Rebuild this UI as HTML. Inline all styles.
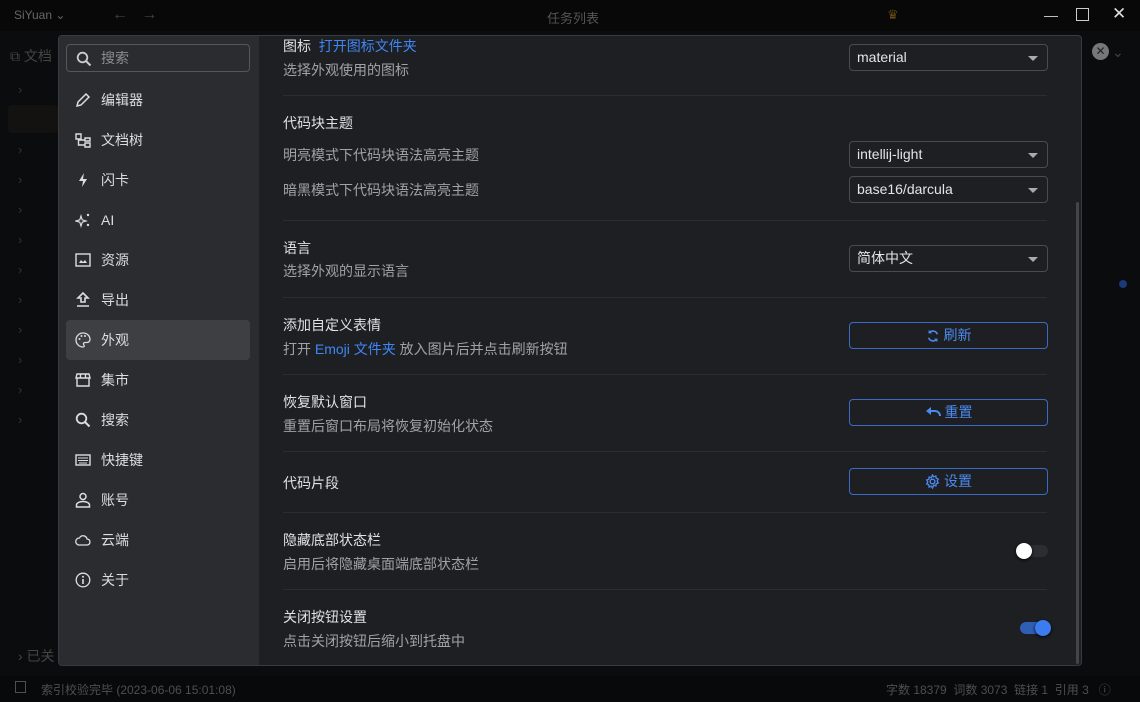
<!DOCTYPE html>
<html><head><meta charset="utf-8"><style>
*{box-sizing:border-box;margin:0;padding:0}
body{width:1140px;height:702px;background:#0b0c0d;font-family:"Liberation Sans","Noto Sans CJK SC",sans-serif;font-size:14px;color:#c8c9cc;position:relative;overflow:hidden}
.abs{position:absolute}
.top{left:0;top:0;width:1140px;height:31px;background:#080809;color:#555}
.dlg{left:58px;top:35px;width:1024px;height:631px;background:#1e1f22;border:1px solid #3a3b3e;border-radius:4px;overflow:hidden}
.side{left:0;top:0;width:200px;height:631px;background:#2b2c30}
.it{position:absolute;left:7px;width:184px;height:40px;border-radius:4px;line-height:40px;padding-left:35px;color:#dcdde0;font-size:14px}
.it svg{position:absolute;left:9px;top:12px}
.it.act{background:#3e3f43}
.lbl{position:absolute;left:224px;color:#e0e1e4;font-size:14px}
.sub{position:absolute;left:224px;color:#9ea3a8;font-size:14px}
.sep{position:absolute;left:224px;width:764px;height:1px;background:#2c2d30}
.sel{position:absolute;left:790px;width:199px;height:27px;border:1px solid #4a4b4f;border-radius:4px;padding-left:7px;line-height:25px;color:#e4e5e8;font-size:14px}
.sel:after{content:"";position:absolute;right:9px;top:11px;border-left:5px solid transparent;border-right:5px solid transparent;border-top:5px solid #aaa}
.btn{position:absolute;left:790px;width:199px;height:27px;border:1px solid #3a6bc4;border-radius:4px;color:#4b8af0;text-align:center;line-height:25px;font-size:14px}
.btn svg{vertical-align:-3px;margin-right:4px}
.blue{color:#3f86f5}
</style></head><body>
<div class="abs top">
<span class="abs" style="left:14px;top:8px;font-size:12px;color:#666">SiYuan ⌄</span>
<span class="abs" style="left:112px;top:6px;color:#444;font-size:16px">←&nbsp;&nbsp;&nbsp;→</span>
<span class="abs" style="left:547px;top:8px;font-size:13px;color:#555">任务列表</span>
<span class="abs" style="left:887px;top:7px;color:#6a4a10;font-size:13px">♛</span>
<span class="abs" style="left:1044px;top:7px;color:#ccc;font-size:14px">—</span>
<span class="abs" style="left:1076px;top:8px;width:13px;height:13px;border:1.5px solid #ccc"></span>
<span class="abs" style="left:1112px;top:4px;color:#ddd;font-size:17px">✕</span>
</div>
<div class="abs" style="left:10px;top:46px;color:#444;font-size:14px">⧉ 文档</div>
<div class="abs" style="left:18px;top:75px;color:#333;font-size:13px;line-height:30px">›<br>›<br>›<br>›<br>›<br>›<br>›<br>›<br>›<br>›<br>›<br>›</div>
<div class="abs" style="left:8px;top:105px;width:50px;height:28px;background:#131210;border-radius:4px"></div>
<div class="abs" style="left:18px;top:646px;color:#444;font-size:14px">› 已关</div>
<div class="abs" style="left:1092px;top:43px;width:17px;height:17px;border-radius:50%;background:#777;color:#222;font-size:12px;text-align:center;line-height:17px">✕</div>
<div class="abs" style="left:1112px;top:44px;color:#444;font-size:14px">⌄</div>
<div class="abs" style="left:1119px;top:280px;width:8px;height:8px;border-radius:50%;background:#1a3a7a"></div>
<div class="abs" style="left:0;top:676px;width:1140px;height:26px;background:#08090a;color:#4e4f52;font-size:12px">
<span class="abs" style="left:15px;top:5px;width:11px;height:12px;border:1.5px solid #4e4f52"></span>
<span class="abs" style="left:41px;top:5px">索引校验完毕 (2023-06-06 15:01:08)</span>
<span class="abs" style="left:886px;top:5px">字数 18379&nbsp; 词数 3073&nbsp; 链接 1&nbsp; 引用 3&nbsp;&nbsp; ⓘ</span>
</div>

<div class="abs dlg">
<div class="abs side">
<div class="abs" style="left:7px;top:8px;width:184px;height:28px;border:1px solid #55575b;border-radius:4px;color:#8a8c90;line-height:26px;padding-left:34px">搜索
<svg class="abs" style="left:9px;top:6px" width="16" height="16" viewBox="0 0 16 16"><circle cx="6.5" cy="6.5" r="4.8" fill="none" stroke="#ccc" stroke-width="1.8"/><path d="M10 10l4.5 4.5" stroke="#ccc" stroke-width="2"/></svg></div>
<div class="it" style="top:44px"><svg width="16" height="16" viewBox="0 0 16 16"><path d="M2 14l1-4 8-8 3 3-8 8z" fill="none" stroke="#ddd" stroke-width="1.5"/></svg>编辑器</div>
<div class="it" style="top:84px"><svg width="16" height="16" viewBox="0 0 16 16"><path d="M1 2h5v5H1zM10 6h5v3h-5zM10 11h5v4h-5zM3.5 7v6h6M3.5 8h6" fill="none" stroke="#ddd" stroke-width="1.4"/></svg>文档树</div>
<div class="it" style="top:124px"><svg width="16" height="16" viewBox="0 0 16 16"><path d="M9 1L4 9h4l-1 6 5-8H8z" fill="#ddd"/></svg>闪卡</div>
<div class="it" style="top:164px"><svg width="16" height="16" viewBox="0 0 16 16"><path d="M6 4l1.2 3.8L11 9l-3.8 1.2L6 14l-1.2-3.8L1 9l3.8-1.2z" fill="none" stroke="#ddd" stroke-width="1.2"/><circle cx="13" cy="3" r="1.2" fill="#ddd"/><circle cx="13" cy="13" r="1.2" fill="#ddd"/></svg>AI</div>
<div class="it" style="top:204px"><svg width="16" height="16" viewBox="0 0 16 16"><rect x="1" y="2" width="14" height="12" fill="none" stroke="#ddd" stroke-width="1.4"/><path d="M4 11l2-3 2 2 2-2 2 3z" fill="#ddd"/></svg>资源</div>
<div class="it" style="top:244px"><svg width="16" height="16" viewBox="0 0 16 16"><path d="M8 1l5 5h-3v4H6V6H3zM2 14h12" fill="none" stroke="#ddd" stroke-width="1.6"/></svg>导出</div>
<div class="it act" style="top:284px"><svg width="16" height="16" viewBox="0 0 16 16"><path d="M8 1a7 7 0 000 14c1.5 0 1.5-1.5.7-2.3-.8-.9 0-2.2 1.2-2.2H12a3 3 0 003-3C15 3.8 12 1 8 1z" fill="none" stroke="#ddd" stroke-width="1.3"/><circle cx="4.5" cy="7" r="1" fill="#ddd"/><circle cx="6.5" cy="4" r="1" fill="#ddd"/><circle cx="10" cy="4" r="1" fill="#ddd"/></svg>外观</div>
<div class="it" style="top:324px"><svg width="16" height="16" viewBox="0 0 16 16"><path d="M2 2h12l1 4H1zM2 6v8h12V6M5.5 2v4M10.5 2v4" fill="none" stroke="#ddd" stroke-width="1.4"/></svg>集市</div>
<div class="it" style="top:364px"><svg width="16" height="16" viewBox="0 0 16 16"><circle cx="6.5" cy="6.5" r="4.8" fill="none" stroke="#ddd" stroke-width="1.8"/><path d="M10 10l4.5 4.5" stroke="#ddd" stroke-width="2"/></svg>搜索</div>
<div class="it" style="top:404px"><svg width="16" height="16" viewBox="0 0 16 16"><rect x="1" y="3" width="14" height="10" fill="none" stroke="#ddd" stroke-width="1.4"/><path d="M3 6h10M3 8.5h10M4 11h8" stroke="#ddd" stroke-width="1"/></svg>快捷键</div>
<div class="it" style="top:444px"><svg width="16" height="16" viewBox="0 0 16 16"><circle cx="8" cy="4.5" r="3" fill="none" stroke="#ddd" stroke-width="1.5"/><path d="M1.5 15v-2c0-2 3-3.5 6.5-3.5s6.5 1.5 6.5 3.5v2z" fill="none" stroke="#ddd" stroke-width="1.5"/></svg>账号</div>
<div class="it" style="top:484px"><svg width="16" height="16" viewBox="0 0 16 16"><path d="M4 13h8a3 3 0 000-6 4 4 0 00-7.5-1A3.5 3.5 0 004 13z" fill="none" stroke="#ddd" stroke-width="1.3"/></svg>云端</div>
<div class="it" style="top:524px"><svg width="16" height="16" viewBox="0 0 16 16"><circle cx="8" cy="8" r="6.8" fill="none" stroke="#ddd" stroke-width="1.3"/><path d="M8 7v5" stroke="#ddd" stroke-width="1.6"/><circle cx="8" cy="4.7" r="1" fill="#ddd"/></svg>关于</div>
</div>

<div class="lbl" style="top:0px">图标&nbsp; <span class="blue">打开图标文件夹</span></div>
<div class="sub" style="top:24px">选择外观使用的图标</div>
<div class="sel" style="top:8px">material</div>
<div class="sep" style="top:59px"></div>
<div class="lbl" style="top:77px">代码块主题</div>
<div class="sub" style="top:109px">明亮模式下代码块语法高亮主题</div>
<div class="sel" style="top:105px">intellij-light</div>
<div class="sub" style="top:144px">暗黑模式下代码块语法高亮主题</div>
<div class="sel" style="top:140px">base16/darcula</div>
<div class="sep" style="top:184px"></div>
<div class="lbl" style="top:202px">语言</div>
<div class="sub" style="top:225px">选择外观的显示语言</div>
<div class="sel" style="top:209px">简体中文</div>
<div class="sep" style="top:261px"></div>
<div class="lbl" style="top:279px">添加自定义表情</div>
<div class="sub" style="top:303px">打开 <span class="blue">Emoji 文件夹</span> 放入图片后并点击刷新按钮</div>
<div class="btn" style="top:286px"><svg width="14" height="14" viewBox="0 0 16 16"><path d="M13 6a5.5 5.5 0 00-9.5-1.5M3 10a5.5 5.5 0 009.5 1.5" fill="none" stroke="#4b8af0" stroke-width="1.8"/><path d="M3 1v4h4zM13 15v-4H9z" fill="#4b8af0"/></svg>刷新</div>
<div class="sep" style="top:338px"></div>
<div class="lbl" style="top:356px">恢复默认窗口</div>
<div class="sub" style="top:380px">重置后窗口布局将恢复初始化状态</div>
<div class="btn" style="top:363px"><svg width="16" height="14" viewBox="0 0 16 14"><path d="M5 5h5a5 5 0 015 5" fill="none" stroke="#4b8af0" stroke-width="2"/><path d="M1 5l5-4v8z" fill="#4b8af0"/></svg>重置</div>
<div class="sep" style="top:415px"></div>
<div class="lbl" style="top:437px">代码片段</div>
<div class="btn" style="top:432px"><svg width="15" height="15" viewBox="0 0 16 16"><circle cx="8" cy="8" r="2.5" fill="none" stroke="#4b8af0" stroke-width="1.5"/><path d="M8 1l1.3 2 2.3-.8.3 2.4 2.3.8-1.2 2.1 1.2 2-2.3.9-.3 2.4-2.3-.9L8 15l-1.3-2-2.3.9-.3-2.4L1.8 10.6 3 8.5 1.8 6.4l2.3-.8.3-2.4 2.3.8z" fill="none" stroke="#4b8af0" stroke-width="1.4"/></svg>设置</div>
<div class="sep" style="top:476px"></div>
<div class="lbl" style="top:494px">隐藏底部状态栏</div>
<div class="sub" style="top:518px">启用后将隐藏桌面端底部状态栏</div>
<div class="abs" style="left:961px;top:509px;width:28px;height:12px;border-radius:6px;background:#2c2d31"></div>
<div class="abs" style="left:957px;top:507px;width:16px;height:16px;border-radius:50%;background:#fff;box-shadow:0 1px 3px #000"></div>
<div class="sep" style="top:553px"></div>
<div class="lbl" style="top:571px">关闭按钮设置</div>
<div class="sub" style="top:595px">点击关闭按钮后缩小到托盘中</div>
<div class="abs" style="left:961px;top:586px;width:28px;height:12px;border-radius:6px;background:#2f5fb5"></div>
<div class="abs" style="left:976px;top:584px;width:16px;height:16px;border-radius:50%;background:#3b7cf0;box-shadow:0 1px 3px #000"></div>
<div class="abs" style="left:1017px;top:166px;width:3px;height:462px;background:#444548;border-radius:2px"></div>
</div>
</body></html>
